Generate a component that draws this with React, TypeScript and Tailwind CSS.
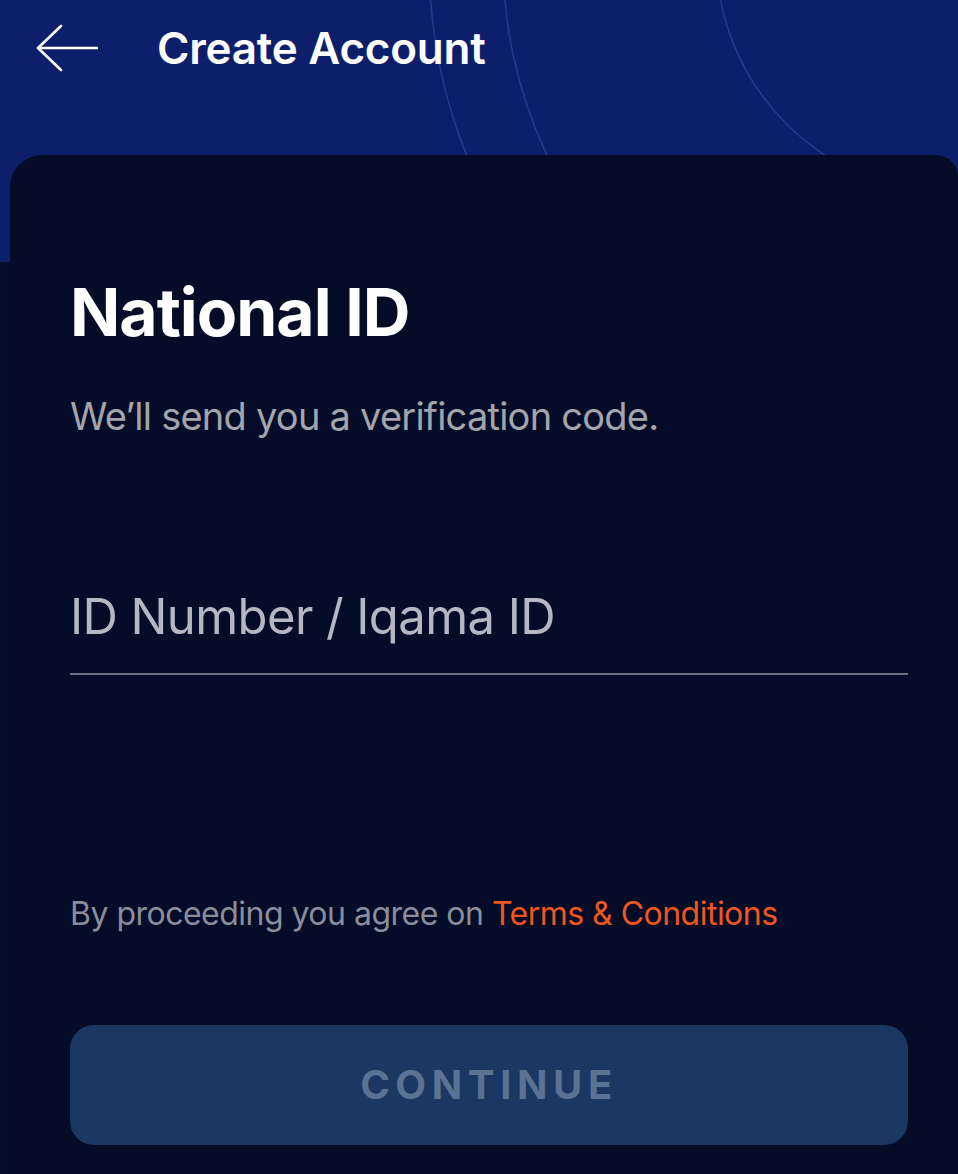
import React from "react";

export default function App() {
  return (
    <div
      className="relative w-[958px] h-[1174px] overflow-hidden bg-[#050d2c]"
      style={{ fontFamily: "Inter, 'Noto Sans', sans-serif" }}
    >
      <div className="relative h-[262px] bg-[#0d1f6b] overflow-hidden">
        <svg
          className="absolute inset-0"
          width="958"
          height="262"
          viewBox="0 0 958 262"
          fill="none"
        >
          <circle cx="956" cy="-46" r="240" stroke="rgba(120,140,220,0.25)" strokeWidth="1.6" />
          <circle cx="962" cy="-41" r="459" stroke="rgba(120,140,220,0.25)" strokeWidth="1.6" />
          <circle cx="962" cy="-41" r="533" stroke="rgba(120,140,220,0.25)" strokeWidth="1.6" />
        </svg>
        <div className="relative flex items-center h-[96px] pl-[36px]">
          <svg width="62" height="48" viewBox="0 0 62 48" fill="none">
            <path
              d="M61 24H2M2 24L25 2M2 24L25 46"
              stroke="white"
              strokeWidth="2.6"
              strokeLinecap="round"
              strokeLinejoin="round"
            />
          </svg>
          <h1 className="ml-[59px] text-[44px] leading-none font-semibold text-white tracking-[-0.005em]">
            Create Account
          </h1>
        </div>
      </div>

      <div className="relative -mt-[107px] ml-[10px] h-[1100px] rounded-tl-[32px] rounded-tr-[22px] bg-[#040c28] pl-[60px] pr-[50px] pt-[124px]">
        <h2 className="text-[66px] leading-none font-bold text-white tracking-[-0.015em]">
          National ID
        </h2>
        <p className="mt-[52px] text-[38px] leading-none text-[#a3a5ac] tracking-[-0.02em]">
          We’ll send you a verification code.
        </p>
        <div className="mt-[157px] border-b-2 border-[#6b7080] pb-[32px]">
          <span className="block text-[49px] leading-none text-[#b5b8c2] tracking-[-0.012em]">
            ID Number / Iqama ID
          </span>
        </div>
        <p className="mt-[223px] text-[32px] leading-none text-[#8a8e9c] tracking-[-0.016em]">
          By proceeding you agree on{" "}
          <span className="text-[#f0561f]">Terms &amp; Conditions</span>
        </p>
        <button className="mt-[95px] flex h-[120px] w-full items-center justify-center rounded-[24px] bg-[#1b3862]">
          <span className="text-[40px] leading-none font-bold tracking-[0.14em] text-[#5b7393]">
            CONTINUE
          </span>
        </button>
      </div>
    </div>
  );
}
